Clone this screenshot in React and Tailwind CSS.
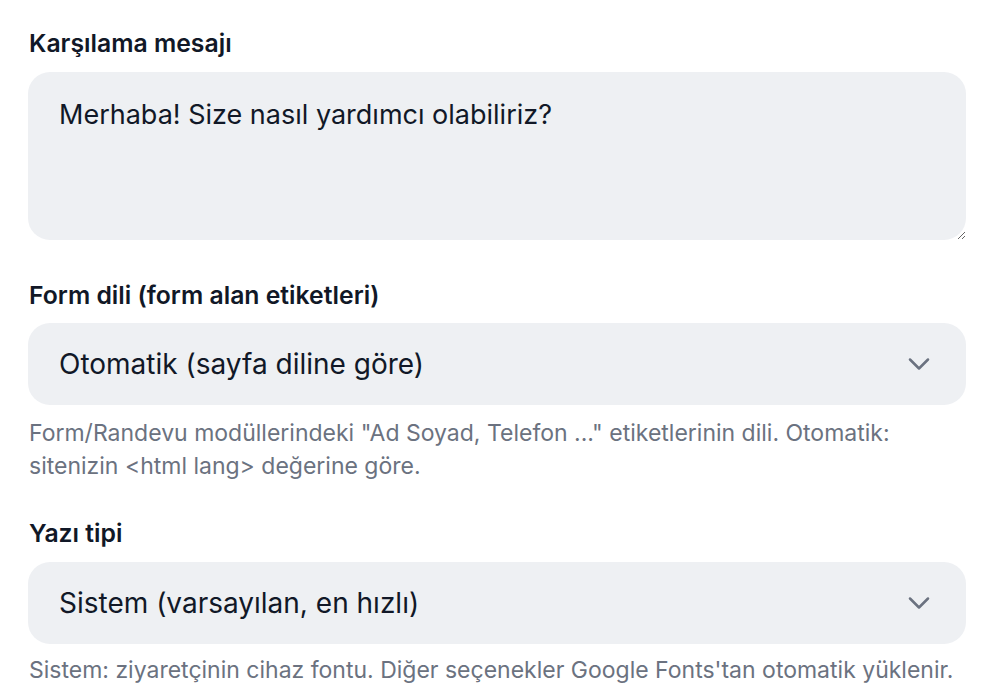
import React from 'react';
import { ChevronDown } from 'lucide-react';

const Label = ({ children, className = '' }) => (
    <label className={`block pl-px text-[24.75px] leading-[30px] font-semibold text-[#111827] ${className}`}>
        {children}
    </label>
);

const Select = ({ value }) => (
    <div className="flex h-[82px] items-center justify-between rounded-[22px] bg-[#eef0f3] pl-[31px] pr-[29px]">
        <span className="text-[28px] leading-[40px] text-[#111827]">{value}</span>
        <ChevronDown size={36} strokeWidth={1.7} className="text-[#6b7280]" />
    </div>
);

const Hint = ({ children, className = '' }) => (
    <p className={`pl-px text-[23px] leading-[33px] text-[#6b7280] ${className}`}>{children}</p>
);

export default function App() {
    return (
        <div className="min-h-screen bg-white px-[28px] pt-[28px]" style={{ fontFamily: 'Inter, "Noto Sans", sans-serif' }}>
            <Label className="mb-[14px]">Karşılama mesajı</Label>
            <textarea
                defaultValue="Merhaba! Size nasıl yardımcı olabiliriz?"
                className="block h-[168px] w-full resize-y rounded-[22px] bg-[#eef0f3] px-[31px] pt-[23px] text-[27px] leading-[40px] text-[#111827] outline-none"
            />

            <Label className="mt-[40px] mb-[13px]">Form dili (form alan etiketleri)</Label>
            <Select value="Otomatik (sayfa diline göre)" />
            <Hint className="mt-[12px]">
                Form/Randevu modüllerindeki "Ad Soyad, Telefon ..." etiketlerinin dili. Otomatik: sitenizin &lt;html lang&gt; değerine göre.
            </Hint>

            <Label className="mt-[35px] mb-[14px]">Yazı tipi</Label>
            <Select value="Sistem (varsayılan, en hızlı)" />
            <Hint className="mt-[10px]">
                Sistem: ziyaretçinin cihaz fontu. Diğer seçenekler Google Fonts'tan otomatik yüklenir.
            </Hint>
        </div>
    );
}
